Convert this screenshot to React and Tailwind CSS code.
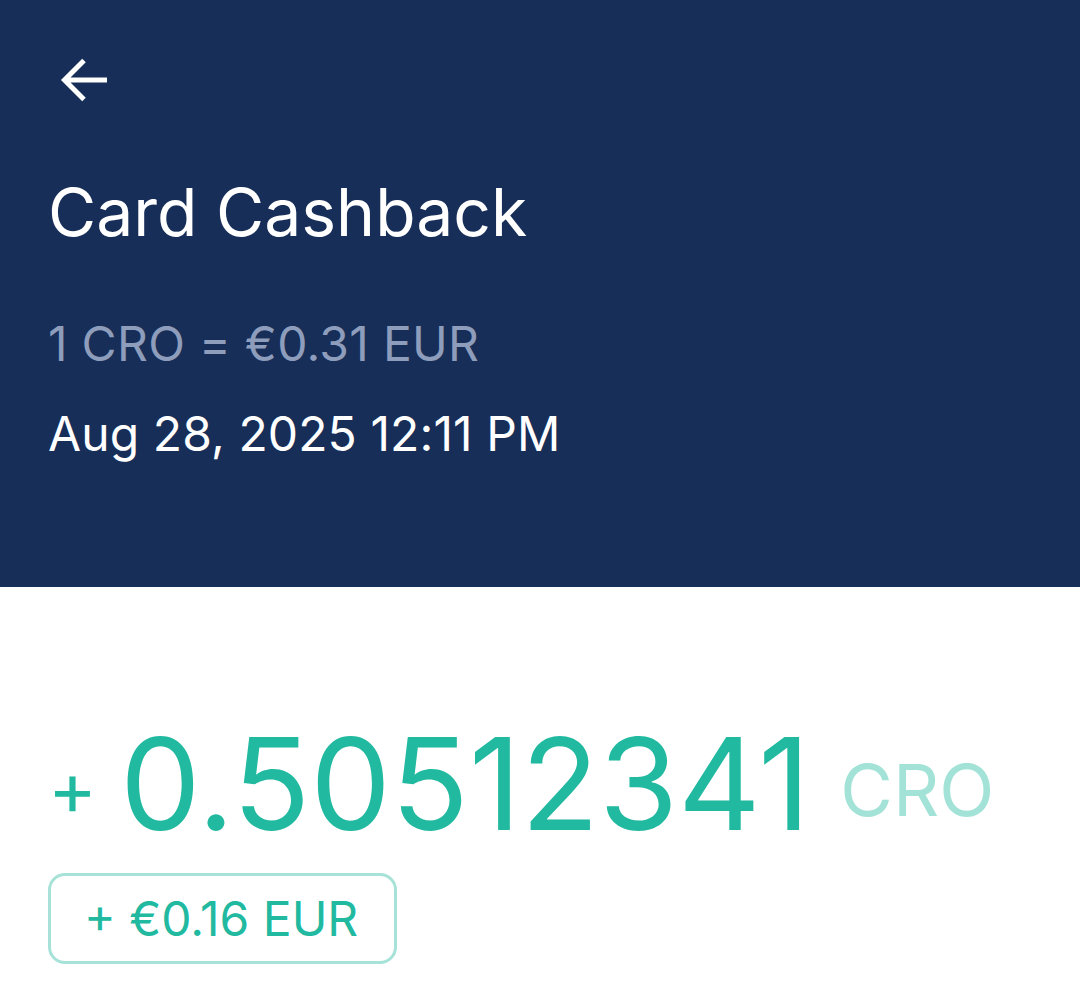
import React from 'react';

export default function App() {
    return (
        <div className="w-[1080px] h-[1007px] bg-white overflow-hidden" style={{ fontFamily: 'Inter, "Noto Sans", sans-serif' }}>
            {/* Header */}
            <div className="bg-[#172e58] h-[587px] px-[48px] pt-[57px]">
                <svg width="48" height="46" viewBox="0 0 48 46" fill="none" stroke="white" strokeWidth="5" className="ml-[12px] overflow-visible">
                    <path d="M47 23H5M24 3.5L4.5 23L24 42.5" />
                </svg>
                <h1 className="text-white text-[66px] leading-none mt-[76px]">Card Cashback</h1>
                <p className="text-[#8e9dbb] text-[48px] leading-none mt-[75px] tracking-[0.3px]">1 CRO = €0.31 EUR</p>
                <p className="text-white text-[48px] leading-none mt-[42px] tracking-[0.1px]">Aug 28, 2025 12:11 PM</p>
            </div>

            {/* Amount */}
            <div className="px-[48px] pt-[133px]">
                <div className="flex items-start">
                    <span className="text-[#21b99f] text-[74px] leading-none mr-[23px] self-center translate-y-[4px]">+</span>
                    <span className="text-[#21b99f] text-[128px] leading-none">0.50512341</span>
                    <span className="text-[#a3e3d7] text-[72px] leading-none ml-[30px] mt-[34px]">CRO</span>
                </div>
                <div className="mt-[25px] flex items-center w-[349px] h-[91px] pl-[33px] border-[3px] border-[#a6e2d8] rounded-[17px]">
                    <span className="text-[#21b99f] text-[48px] leading-none">+ €0.16 EUR</span>
                </div>
            </div>
        </div>
    );
}
